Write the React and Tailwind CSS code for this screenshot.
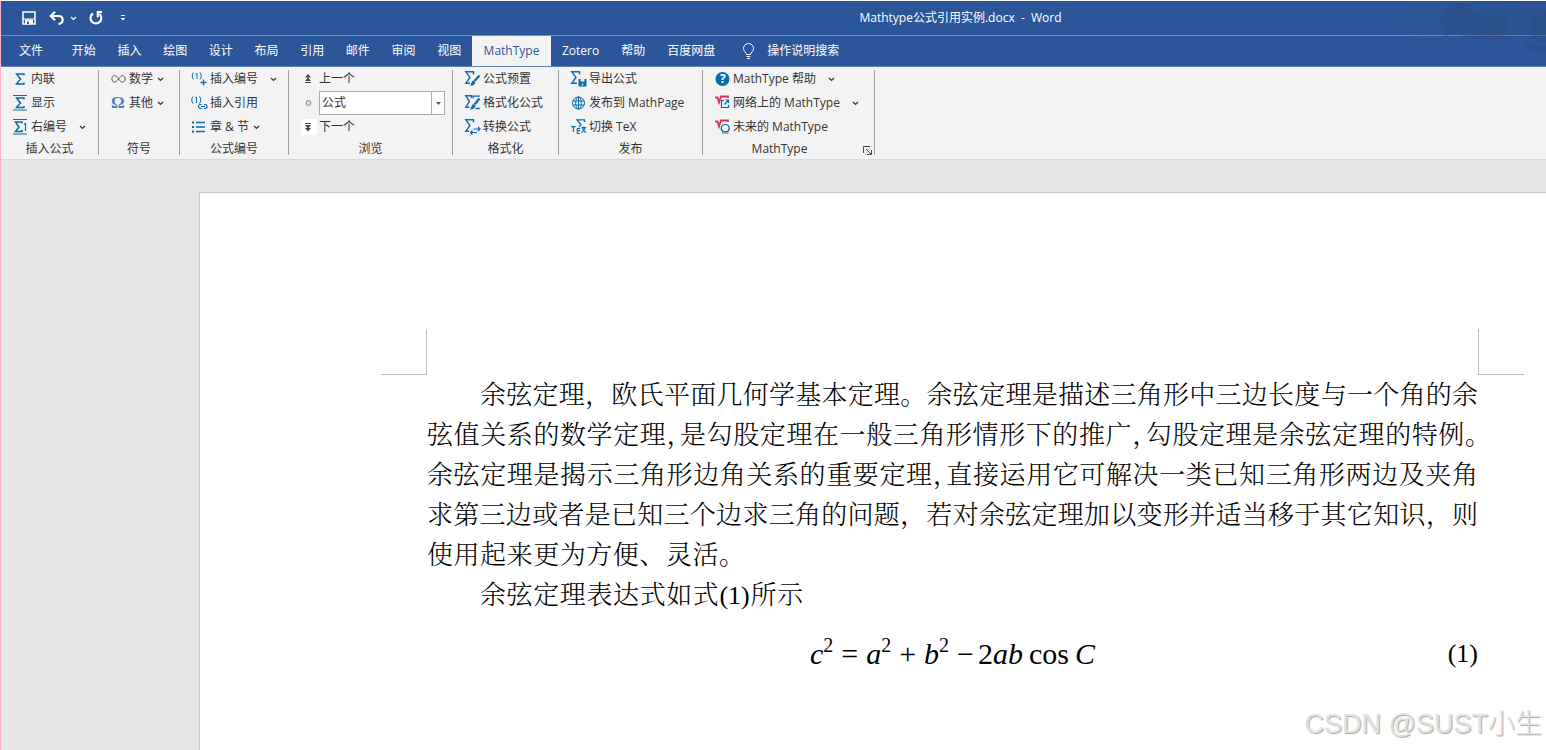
import React, { useState } from 'react';
import clsx from 'clsx';

const TABS = ['开始', '插入', '绘图', '设计', '布局', '引用', '邮件', '审阅', '视图'];

const Icon = ({ children }) => (
  <svg viewBox="0 0 16 16" className="h-4 w-4 shrink-0 overflow-visible" fill="none" stroke="#0a6ca8" aria-hidden="true">
    {children}
  </svg>
);

const Sym = ({ x = 1, y = 13, size = 16, bold = true, color = '#0a6ca8', serif = true, children }) => (
  <text
    x={x}
    y={y}
    fontSize={size}
    fontFamily={serif ? 'Liberation Serif, serif' : 'Open Sans, sans-serif'}
    fontWeight={bold ? 700 : 400}
    fill={color}
    stroke="none"
  >
    {children}
  </text>
);

const Chevron = ({ className }) => (
  <svg viewBox="0 0 7 5" className={clsx('h-[5px] w-[7px] shrink-0', className)} fill="none" stroke="currentColor" aria-hidden="true">
    <path d="M1 1l2.5 2.5L6 1" strokeWidth="1.2" />
  </svg>
);

const InlineIcon = () => (
  <Icon>
    <path d="M11 4.500V3H3.500L7.500 8 3.500 13H11V11.500" strokeWidth="1.500" />
  </Icon>
);

const DisplayIcon = () => (
  <Icon>
    <path d="M11 4.500V3H3.500L7.500 8 3.500 12.500H11V11" strokeWidth="1.500" />
    <path d="M0 .5h14M0 15h14" />
  </Icon>
);

const RightNumberIcon = () => (
  <Icon>
    <path d="M9 4.500V3H2.500L6 8 2.500 12.500H9V11" strokeWidth="1.500" />
    <path d="M11 5.500l1.500-1V12" strokeWidth="1.200" />
    <path d="M0 .5h14M0 15h14" />
  </Icon>
);

const InfinityIcon = () => (
  <Icon>
    <path
      d="M7.5 8C6 5.5 5 4.7 3.6 4.7 2 4.7.9 6 .9 7.9S2 11 3.5 11C5 11 6 10 7.5 8s2.500-3.300 4-3.300 2.700 1.300 2.700 3.200S13.100 11 11.500 11C10 11 9 10.200 7.500 8z"
      stroke="#555"
    />
  </Icon>
);

const OmegaIcon = () => (
  <Icon><Sym x={0} y={13} size={17} color="#4a7fc1">Ω</Sym></Icon>
);

const InsertNumberIcon = () => (
  <Icon>
    <path d="M1.500 1.500c-1.700 2-1.700 5 0 7M8 1.500c1.700 2 1.700 5 0 7M3.500 3.200L5 2.200V8" />
    <path d="M11.500 8.500v6M8.500 11.500h6" strokeWidth="1.300" />
  </Icon>
);

const InsertRefIcon = () => (
  <Icon>
    <path d="M1 1.500c-1.700 2-1.700 5 0 7M7.500 1.500c1.700 2 1.700 5 0 7M3 3.200L4.500 2.200V8" />
    <path d="M9.500 13.500h-1a2 2 0 010-4h1M12 9.500h1a2 2 0 010 4h-1M9 11.500h4" strokeWidth="1.200" />
  </Icon>
);

const ChapterIcon = () => (
  <Icon>
    <path d="M0 3.500h2M0 8h2M0 12.500h2" strokeWidth="2" />
    <path d="M4 3.500h9M4 8h9M4 12.500h9" strokeWidth="1.500" />
  </Icon>
);

const PrevIcon = () => (
  <Icon>
    <path d="M7 3L4 6.500h6zM7 6.500L4 10h6z" fill="#444" stroke="none" />
    <path d="M4 11.500h6" stroke="#444" />
  </Icon>
);

const DotIcon = () => (
  <Icon>
    <circle cx="7.500" cy="8" r="2.500" fill="#ddd" stroke="#888" />
  </Icon>
);

const NextIcon = () => (
  <span className="bg-white">
    <Icon>
      <path d="M4 4.500h6" stroke="#444" />
      <path d="M4 6h6L7 9.500zM4 9h6l-3 3.500z" fill="#444" stroke="none" />
    </Icon>
  </span>
);

const PresetIcon = () => (
  <Icon>
    <path d="M8.500 3.500V.800H.800L5 6.500.800 12.200H5" strokeWidth="1.400" />
    <path d="M14.500 4.500L9.500 10" strokeWidth="2.200" />
    <path d="M8.500 9.500l2 2c-1 2.500-3 3.500-5.500 3 1.500-1 1-4 3.500-5z" fill="#0a6ca8" stroke="none" />
  </Icon>
);

const FormatIcon = () => (
  <Icon>
    <path d="M6.500 3V.800H.800L4.500 6.500.800 12.200H4.500" strokeWidth="1.400" />
    <path d="M8 3.200V1.200h6.800M10.500 13.500h4.300" strokeWidth="1.300" />
    <path d="M14.500 3.500L9.500 9.500" strokeWidth="2.200" />
    <path d="M8.500 9l2 2c-1 2.500-3 4-5.500 3.500 1.500-1 1-4.500 3.500-5.500z" fill="#0a6ca8" stroke="none" />
  </Icon>
);

const ConvertIcon = () => (
  <Icon>
    <path d="M8.500 3.500V.800H.800L5 6.500.800 12.200H4" strokeWidth="1.400" />
    <path d="M8.500 10H15M13 8l2 2-2 2M12 13.500H5.500M7.500 11.500l-2 2 2 2" strokeWidth="1.200" />
  </Icon>
);

const ExportIcon = () => (
  <Icon>
    <path d="M8.500 3.500V.800H.800L5 6.500.800 12.200H6" strokeWidth="1.400" />
    <path d="M7.500 8h8v7.500h-8z" fill="#0a6ca8" stroke="none" />
    <path d="M9.500 8v2.500h4V8" fill="#f3f3f3" stroke="none" />
    <path d="M11.500 12.500v2" stroke="#f3f3f3" strokeWidth="1.200" />
  </Icon>
);

const GlobeIcon = () => (
  <Icon>
    <circle cx="7.500" cy="8" r="6" />
    <ellipse cx="7.500" cy="8" rx="2.800" ry="6" />
    <path d="M7.500 2v12M2 6h11M2 10h11" />
  </Icon>
);

const TexIcon = () => (
  <Icon>
    <path d="M13.500 3V.800H6L10 5.500 8 8M11 8.500h3" strokeWidth="1.300" />
    <Sym x={0} y={13} size={8} serif={false}>T</Sym>
    <Sym x={5} y={15} size={8} serif={false}>E</Sym>
    <Sym x={10} y={14} size={8} serif={false}>X</Sym>
  </Icon>
);

const HelpIcon = () => (
  <Icon>
    <circle cx="7.500" cy="8" r="7" fill="#0a6ca8" stroke="none" />
    <Sym x={5} y={12} size={12} color="#fff" serif={false}>?</Sym>
  </Icon>
);

const WebIcon = () => (
  <Icon>
    <path d="M0 2.500h2.500l1.500 5L6 1.500h7v1.500" stroke="#e0304e" strokeWidth="1.800" />
    <path d="M9 5.500H6.500v7h7V10M10.500 5h3v3M13.500 5L9.500 9.500" strokeWidth="1.200" />
  </Icon>
);

const FutureIcon = () => (
  <Icon>
    <path d="M0 2.500h2.500l1.500 5L6 1.500h7v1.500" stroke="#e0304e" strokeWidth="1.800" />
    <path d="M10.200 5.500a3.800 3.800 0 012.300 7H8a3.800 3.800 0 012.200-7zM7 14h6.500" strokeWidth="1.200" />
  </Icon>
);

const GROUPS = [
  {
    name: '插入公式',
    width: 'w-[97px]',
    items: [
      { icon: InlineIcon, text: '内联' },
      { icon: DisplayIcon, text: '显示' },
      { icon: RightNumberIcon, text: '右编号', menu: 'wide' },
    ],
  },
  {
    name: '符号',
    width: 'w-20',
    items: [
      { icon: InfinityIcon, text: '数学', menu: 'tight' },
      { icon: OmegaIcon, text: '其他', menu: 'tight' },
    ],
  },
  {
    name: '公式编号',
    width: 'w-[108px]',
    items: [
      { icon: InsertNumberIcon, text: '插入编号', menu: 'wide' },
      { icon: InsertRefIcon, text: '插入引用' },
      { icon: ChapterIcon, text: '章 & 节', menu: 'tight' },
    ],
  },
  {
    name: '浏览',
    width: 'w-[163px]',
    items: [
      { icon: PrevIcon, text: '上一个' },
      { icon: DotIcon, select: true },
      { icon: NextIcon, text: '下一个' },
    ],
  },
  {
    name: '格式化',
    width: 'w-[105px]',
    items: [
      { icon: PresetIcon, text: '公式预置' },
      { icon: FormatIcon, text: '格式化公式' },
      { icon: ConvertIcon, text: '转换公式' },
    ],
  },
  {
    name: '发布',
    width: 'w-[143px]',
    items: [
      { icon: ExportIcon, text: '导出公式' },
      { icon: GlobeIcon, text: '发布到 MathPage' },
      { icon: TexIcon, text: '切换 TeX' },
    ],
  },
  {
    name: 'MathType',
    width: 'w-[171px]',
    launcher: true,
    items: [
      { icon: HelpIcon, text: 'MathType 帮助', menu: 'wide' },
      { icon: WebIcon, text: '网络上的 MathType', menu: 'wide' },
      { icon: FutureIcon, text: '未来的 MathType' },
    ],
  },
];

const BrowseSelect = () => {
  const [value, setValue] = useState('公式');

  return (
    <div className="relative h-6 w-[126px]">
      <select
        aria-label="浏览"
        value={value}
        onChange={(e) => setValue(e.target.value)}
        className="h-full w-full appearance-none border border-[#ababab] bg-white px-0.5 outline-none"
      >
        <option>公式</option>
        <option>章</option>
        <option>节</option>
      </select>
      <span className="pointer-events-none absolute inset-y-0 right-0 flex w-3.5 items-center justify-center border border-[#ababab]">
        <svg viewBox="0 0 5 3" className="h-[3px] w-[5px]" aria-hidden="true">
          <path d="M0 0h5L2.500 3z" fill="#555" />
        </svg>
      </span>
    </div>
  );
};

const RibbonItem = ({ item }) => {
  const ItemIcon = item.icon;

  if (item.select) {
    return (
      <div className="flex h-6 items-center gap-0.5">
        <ItemIcon />
        <BrowseSelect />
      </div>
    );
  }

  return (
    <button type="button" className="flex h-6 items-center gap-0.5 whitespace-nowrap">
      <ItemIcon />
      <span>{item.text}</span>
      {item.menu && <Chevron className={item.menu === 'wide' ? 'ml-2.5' : 'ml-0.5'} />}
    </button>
  );
};

const RibbonGroup = ({ group }) => (
  <>
    <section aria-label={group.name} className={clsx('relative flex shrink-0 flex-col', group.width)}>
      <div className="h-[73px] pl-3">
        {group.items.map((item) => (
          <RibbonItem key={item.text || 'select'} item={item} />
        ))}
      </div>
      <div className={clsx('h-5 text-center leading-5', group.launcher && 'pr-[18px]')}>{group.name}</div>
      {group.launcher && (
        <button type="button" aria-label="MathType 选项" className="absolute right-0.5 bottom-1">
          <svg viewBox="0 0 9 9" className="h-[9px] w-[9px]" fill="none" stroke="#444">
            <path d="M.5 7V.5H7M3 3l5 5M8.500 4v4.500H4" />
          </svg>
        </button>
      )}
    </section>
    <div className="mt-[3px] mb-1 w-px bg-[#a0a0a0]" />
  </>
);

const TitleBar = () => (
  <div className="flex h-[35px] items-center border-b border-[#7791bf]">
    <div className="flex w-[374px] items-center pl-[21px]">
      <button type="button" aria-label="保存">
        <svg viewBox="0 0 14 14" className="h-3.5 w-3.5" fill="none" stroke="#fff">
          <path d="M1 1h12v12H1z" strokeWidth="1.500" />
          <path d="M1 8h12" />
          <path d="M3 8.500h8V13H3z" fill="#fff" stroke="none" />
          <path d="M5 10.500h2V13H5z" fill="#2b579a" stroke="none" />
        </svg>
      </button>
      <button type="button" aria-label="撤消" className="ml-[13px]">
        <svg viewBox="0 0 16 14" className="h-3.5 w-4" fill="none" stroke="#fff" strokeWidth="2.200">
          <path d="M2 5h7.500c5.500 0 5.500 7.500 0 8" />
          <path d="M6 .8L1.800 5 6 9.200" />
        </svg>
      </button>
      <button type="button" aria-label="撤消选项" className="ml-[5px]">
        <Chevron />
      </button>
      <button type="button" aria-label="恢复" className="ml-3">
        <svg viewBox="0 0 14 14" className="h-3.5 w-3.5" fill="none" stroke="#fff" strokeWidth="2.200">
          <path d="M4 2.500A5.400 5.400 0 1010.500 3" />
          <path d="M13 1.200H8.800v5" />
        </svg>
      </button>
      <button type="button" aria-label="自定义快速访问工具栏" className="ml-[17px]">
        <svg viewBox="0 0 6 6" className="h-1.5 w-1.5">
          <path d="M1 0h4v1H1zM.500 3h5L3 5.500z" fill="#fff" />
        </svg>
      </button>
    </div>
    <h1 className="flex-1 text-center whitespace-pre">Mathtype公式引用实例.docx  -  Word</h1>
  </div>
);

const TabBar = () => (
  <nav className="flex h-[30px] items-stretch whitespace-nowrap">
    <button type="button" className="w-[60px]">文件</button>
    <div className="flex w-[411px]">
      {TABS.map((tab) => (
        <button type="button" key={tab} className="flex-1">{tab}</button>
      ))}
    </div>
    <button type="button" className="w-[79px] bg-[#f3f3f3] text-[#2b579a]">MathType</button>
    <button type="button" className="px-[11px]">Zotero</button>
    <button type="button" className="px-[11px]">帮助</button>
    <button type="button" className="px-[11px]">百度网盘</button>
    <button type="button" className="ml-4 flex items-center gap-3">
      <svg viewBox="0 0 13 16" className="h-4 w-[13px]" fill="none" stroke="#fff">
        <path d="M4.500 11.500c0-2-3-3-3-6a5 5 0 0110 0c0 3-3 4-3 6zM4.500 13.500h4M5 15.500h3" />
      </svg>
      操作说明搜索
    </button>
  </nav>
);

const Clouds = () => (
  <svg viewBox="0 0 166 66" className="pointer-events-none absolute top-0 right-0 h-[66px] w-[166px]" aria-hidden="true">
    <defs>
      <linearGradient id="shade" x1="0" x2="1">
        <stop offset="0" stopColor="#2a4474" stopOpacity="0" />
        <stop offset="1" stopColor="#2a4474" stopOpacity=".25" />
      </linearGradient>
    </defs>
    <path d="M0 0h166v36H0z" fill="url(#shade)" />
    <path
      d="M61 39c3-3 4-5 4-8-8-9-3-28 12-29 11-1 16 5 18 13 6-3 10-1 13 0 8-4 20-1 20 9 0 6-3 9-8 10 5 0 10 1 16 2-18 7-42 4-60-4-5 1-8 2-15 7z"
      fill="#2a4474"
      opacity=".3"
    />
    <path
      d="M166 12c-17 2-20 20-12 27 4 3 8 2 12 2zM146 40c6 4 12 5 20 5v6c-10 0-19-3-21-9z"
      fill="#2a4474"
      opacity=".3"
    />
  </svg>
);

const Line = ({ className, children }) => (
  <span className={clsx('block whitespace-nowrap [text-align-last:justify]', className)}>{children}</span>
);

// Half-width punctuation, as set by the justified typesetting of the paragraph
const Half = ({ children }) => <span className="[font-feature-settings:'halt']">{children}</span>;

const Sup = () => <sup className="top-[-12px] text-[20px] leading-none">2</sup>;

const Formula = () => (
  <div className="flex items-baseline text-[30px] leading-9">
    <i>c</i>
    <Sup />
    <span className="mx-2">=</span>
    <i>a</i>
    <Sup />
    <span className="mx-2">+</span>
    <i>b</i>
    <Sup />
    <span className="mr-1 ml-2">−</span>
    <span>2</span>
    <i>ab</i>
    <span className="mx-1.5">cos</span>
    <i>C</i>
  </div>
);

const DocumentPage = () => (
  <article className="flex-1 border-t border-l border-[#c9c9c9] bg-white pt-[136px] font-['Liberation_Serif','Noto_Serif_CJK_SC','Noto_Sans_CJK_SC',serif] text-[26px] font-light text-black">
    <div className="flex justify-between pr-[22px] pl-[181px]">
      <div className="h-[46px] w-[46px] border-r border-b border-[#bdbdbd]" />
      <div className="h-[46px] w-[46px] border-b border-l border-[#bdbdbd]" />
    </div>
    <div className="pr-[68px] pl-[227px]">
      <p className="pt-px leading-10">
        <Line className="pl-[53px]">余弦定理，欧氏平面几何学基本定理。余弦定理是描述三角形中三边长度与一个角的余</Line>
        <Line>弦值关系的数学定理<Half>，</Half>是勾股定理在一般三角形情形下的推广<Half>，</Half>勾股定理是余弦定理的特例<Half>。</Half></Line>
        <Line>余弦定理是揭示三角形边角关系的重要定理<Half>，</Half>直接运用它可解决一类已知三角形两边及夹角</Line>
        <Line>求第三边或者是已知三个边求三角的问题，若对余弦定理加以变形并适当移于其它知识，则</Line>
        <Line className="w-[318px]">使用起来更为方便、灵活。</Line>
      </p>
      <p className="leading-10">
        <Line className="w-[376px] pl-[53px]">余弦定理表达式如式(1)所示</Line>
      </p>
      <div className="mt-5 grid grid-cols-[1fr_auto_1fr] items-center">
        <span />
        <Formula />
        <span className="text-right">(1)</span>
      </div>
    </div>
  </article>
);

const App = () => {
  return (
    <div className="relative flex min-h-screen flex-col overflow-hidden border-t border-l border-t-white border-l-[#ffb3c8] bg-[#e6e6e6] font-['Open_Sans','Noto_Sans_CJK_SC',sans-serif] text-xs text-[#333333]">
      <header className="relative border-b border-[#5f7fb5] bg-[#2b579a] text-white">
        <TitleBar />
        <TabBar />
        <Clouds />
      </header>

      {/* Ribbon */}
      <div className="flex h-[93px] border-b border-[#dadada] bg-[#f3f3f3]">
        {GROUPS.map((group) => (
          <RibbonGroup key={group.name} group={group} />
        ))}
      </div>

      <main className="flex flex-1 flex-col pt-8 pl-[198px]">
        <DocumentPage />
      </main>

      <div className="absolute right-1 bottom-1.5 font-['Liberation_Sans','Noto_Sans_CJK_SC',sans-serif] text-[27px] leading-10 font-light text-[#e2e2e2] [text-shadow:1px_1px_1px_#a5a5a5]">
        CSDN @SUST小生
      </div>
    </div>
  );
};

export default App;
